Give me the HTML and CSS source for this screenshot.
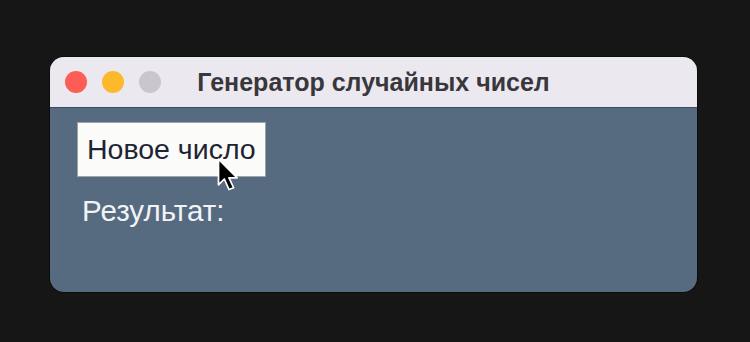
FILE: index.html
```html
<!DOCTYPE html>
<html lang="ru">
<head>
<meta charset="utf-8">
<title>Генератор случайных чисел</title>
<link rel="stylesheet" href="styles.css">
</head>
<body>
<div class="window">
  <div class="titlebar">
    <div class="lights">
      <span class="light red"></span>
      <span class="light yellow"></span>
      <span class="light gray"></span>
    </div>
    <div class="title">Генератор случайных чисел</div>
  </div>
  <div class="content">
    <div class="btn-wrap">
      <button class="btn">Новое число</button>
      <svg class="cursor" width="26" height="35" viewBox="0 0 22 30">
        <path d="M2 1 L2 23 L7 18 L11 27 L15 25.5 L11 17 L18 17 Z" fill="#000" stroke="#fff" stroke-width="1.5" stroke-linejoin="round"/>
      </svg>
    </div>
    <div class="result">Результат:</div>
  </div>
</div>
</body>
</html>
```
FILE: styles.css
```css
html, body {
  margin: 0;
  padding: 0;
  background: #161616;
}
body {
  width: 750px;
  height: 342px;
  padding: 57px 0 0 50px;
  box-sizing: border-box;
  font-family: "Liberation Sans", Arial, sans-serif;
}
.window {
  width: 647px;
  height: 235px;
  border-radius: 14px;
  overflow: hidden;
  background: #566a80;
  display: flex;
  flex-direction: column;
  box-shadow: 0 0 0 1px #0c0c0c;
}
.titlebar {
  height: 50px;
  background: #ece8ef;
  display: grid;
  align-items: center;
  border-bottom: 1px solid #3e4c5c;
}
.lights {
  grid-area: 1 / 1;
  display: flex;
  gap: 15px;
  padding-left: 15px;
}
.light {
  width: 22px;
  height: 22px;
  border-radius: 50%;
  display: block;
}
.red { background: #fd5d55; }
.yellow { background: #fdb92c; }
.gray { background: #c9c7cd; }
.title {
  grid-area: 1 / 1;
  justify-self: center;
  font-weight: bold;
  font-size: 25px;
  color: #37373c;
  padding-top: 1px;
}
.content {
  padding: 14px 0 0 27px;
  display: flex;
  flex-direction: column;
  align-items: flex-start;
}
.btn-wrap {
  position: relative;
}
.btn {
  width: 189px;
  height: 55px;
  background: #fbfbfa;
  border: 1px solid #9ea3a8;
  border-radius: 0;
  margin: 0;
  padding: 0 0 0 9px;
  text-align: left;
  font-family: "Liberation Sans", Arial, sans-serif;
  font-size: 28.5px;
  color: #1d2433;
}
.cursor {
  position: absolute;
  left: 139px;
  top: 36px;
}
.result {
  margin-top: 17px;
  margin-left: 5px;
  font-size: 29.5px;
  color: #f2f3f5;
}
```
